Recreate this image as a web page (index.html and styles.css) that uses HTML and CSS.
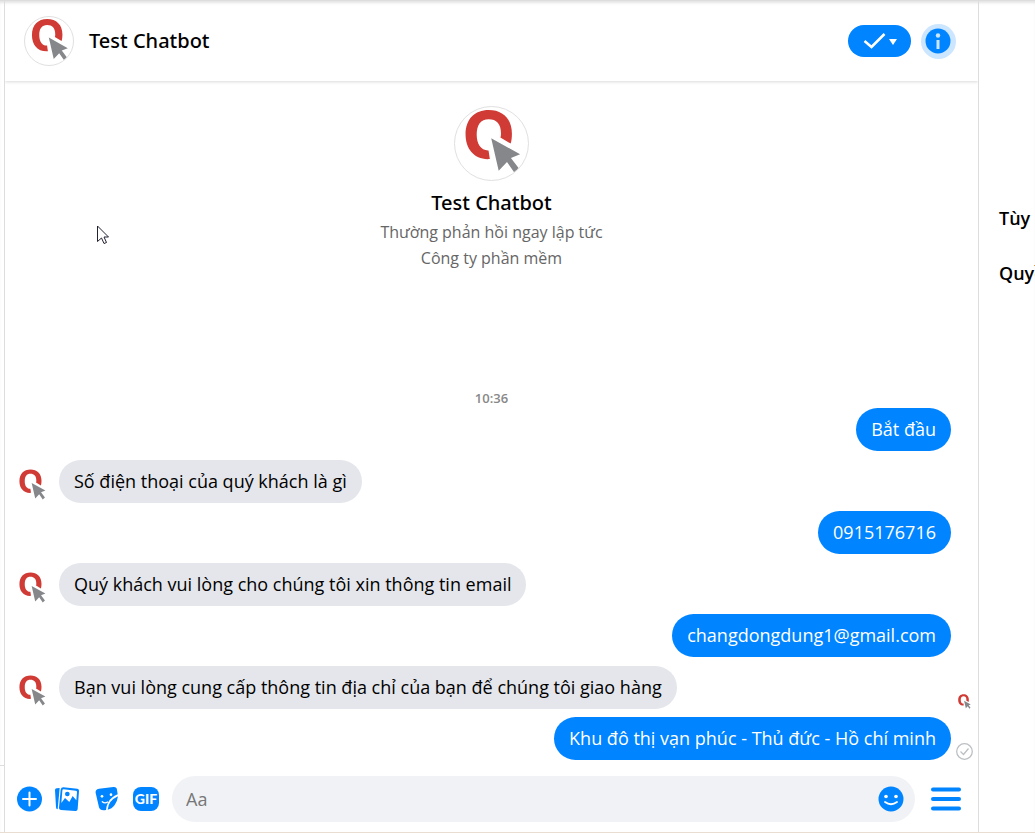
FILE: index.html
```html
<!DOCTYPE html>
<html lang="vi">

    <head>
        <meta charset="UTF-8">
        <meta name="viewport" content="width=device-width, initial-scale=1.0">
        <title>Test Chatbot</title>
        <link rel="stylesheet" href="styles.css">
    </head>

    <body>
        <svg class="symbols" aria-hidden="true">
            <symbol id="logo" viewBox="0 0 74 74">
                <path fill="#d03c35" d="M35.3 52.8C20 54 10.7 43 10.7 28C10.7 12 20 3 34.2 3C48.5 3 57.7 12 57.7 27C57.7 31 57.3 34 56.4 37L46 31C46.5 30 46.6 28 46.6 26.5C46.6 17 42 12.3 34.2 12.3C26 12.3 22 18 22 28C22 38 26.5 44.3 34 44Z"/>
                <path fill="#85878a" d="M36.7 31.7L66 48L56.7 51.7L65 62.7L60.3 66.7L52.7 55.7L44.3 64.7Z"/>
            </symbol>
            <symbol id="logo-small" viewBox="10 2 57 66">
                <path fill="#d03c35" d="M35.3 52.8C20 54 10.7 43 10.7 28C10.7 12 20 3 34.2 3C48.5 3 57.7 12 57.7 27C57.7 31 57.3 34 56.4 37L46 31C46.5 30 46.6 28 46.6 26.5C46.6 17 42 12.3 34.2 12.3C26 12.3 22 18 22 28C22 38 26.5 44.3 34 44Z"/>
                <path fill="#85878a" d="M36.7 31.7L66 48L56.7 51.7L65 62.7L60.3 66.7L52.7 55.7L44.3 64.7Z"/>
            </symbol>
        </svg>

        <div class="page">
            <div class="rail"></div>
            <main class="chat">
                <header class="header">
                    <svg class="logo"><use href="#logo"/></svg>
                    <h1 class="name">Test Chatbot</h1>
                    <button class="done" aria-label="Xong">
                        <svg width="34" height="18" viewBox="0 0 34 18">
                            <path d="M1.5 9L8.5 15L21.5 2" fill="none" stroke="#fff" stroke-width="2.5"/>
                            <path d="M26 7h8l-4 6z" fill="#fff"/>
                        </svg>
                    </button>
                    <button class="info" aria-label="Thông tin">
                        <svg width="35" height="35" viewBox="0 0 35 35">
                            <circle cx="17" cy="17" r="12.5" fill="#0084ff"/>
                            <circle cx="17" cy="11.5" r="2.2" fill="#cce6ff"/>
                            <path d="M15.5 16h3v9h-3z" fill="#cce6ff"/>
                        </svg>
                    </button>
                </header>

                <section class="messages">
                    <div class="profile">
                        <svg class="logo big"><use href="#logo"/></svg>
                        <h2 class="name">Test Chatbot</h2>
                        <p>Thường phản hồi ngay lập tức</p>
                        <p>Công ty phần mềm</p>
                    </div>
                    <time class="time">10:36</time>
                    <div class="row out">
                        <div class="bubble">Bắt đầu</div>
                        <div class="status"></div>
                    </div>
                    <div class="row in">
                        <svg class="avatar"><use href="#logo-small"/></svg>
                        <div class="bubble">Số điện thoại của quý khách là gì</div>
                    </div>
                    <div class="row out">
                        <div class="bubble">0915176716</div>
                        <div class="status"></div>
                    </div>
                    <div class="row in">
                        <svg class="avatar"><use href="#logo-small"/></svg>
                        <div class="bubble">Quý khách vui lòng cho chúng tôi xin thông tin email</div>
                    </div>
                    <div class="row out">
                        <div class="bubble">changdongdung1@gmail.com</div>
                        <div class="status"></div>
                    </div>
                    <div class="row in">
                        <svg class="avatar"><use href="#logo-small"/></svg>
                        <div class="bubble">Bạn vui lòng cung cấp thông tin địa chỉ của bạn để chúng tôi giao hàng</div>
                        <div class="status">
                            <svg width="13" height="15"><use href="#logo-small"/></svg>
                        </div>
                    </div>
                    <div class="row out">
                        <div class="bubble">Khu đô thị vạn phúc - Thủ đức - Hồ chí minh</div>
                        <div class="status">
                            <svg width="17" height="17" viewBox="0 0 17 17" fill="none" stroke="#bcc0c4">
                                <circle cx="8.5" cy="8.5" r="7.8" stroke-width="1.3"/>
                                <path d="M4.5 8.5l3 3l5-6" stroke-width="1.3"/>
                            </svg>
                        </div>
                    </div>
                </section>

                <form class="composer">
                    <div class="tools">
                        <button type="button" aria-label="Thêm">
                            <svg width="26" height="26" viewBox="0 0 26 26">
                                <circle cx="13.5" cy="13" r="12.5" fill="#0084ff"/>
                                <path d="M13.5 6.5v13M7 13h13" stroke="#fff" stroke-width="2" stroke-linecap="round"/>
                            </svg>
                        </button>
                        <button type="button" aria-label="Ảnh">
                            <svg width="26" height="26" viewBox="165 78 78 78">
                                <path d="M165 90Q165 85 170 85L179 84L173 148Q168 148 168 142Z" fill="#0084ff"/>
                                <path d="M190 82L232 86Q238 87 237 93L233 147Q232 154 226 153L183 150Q176 149 177 143L182 89Q183 82 190 82Z" fill="#0084ff"/>
                                <path d="M191 88L227 92Q231 92 231 96L229 121L218 108L208 126L195 114L184 129L187 92Q187 88 191 88Z" fill="#fff"/>
                                <circle cx="202" cy="102" r="7" fill="#0084ff"/>
                            </svg>
                        </button>
                        <button type="button" aria-label="Nhãn dán">
                            <svg width="26" height="26" viewBox="282 78 78 78">
                                <path d="M297 86L340 81Q350 80 351 89L353 103Q333 111 324 128Q318 139 318 150Q300 153 297 142L287 99Q285 88 297 86Z" fill="#0084ff"/>
                                <path d="M354 109Q352 124 344 135Q335 147 323 149Q325 122 354 109Z" fill="#0084ff"/>
                                <circle cx="306" cy="109" r="4" fill="#fff"/>
                                <circle cx="333" cy="104" r="4" fill="#fff"/>
                                <path d="M307 125Q314 132 323 126" fill="none" stroke="#fff" stroke-width="4" stroke-linecap="round"/>
                            </svg>
                        </button>
                        <button type="button" class="gif">GIF</button>
                    </div>
                    <div class="field">
                        <input type="text" placeholder="Aa" aria-label="Tin nhắn">
                        <button type="button" aria-label="Biểu tượng cảm xúc">
                            <svg width="26" height="26" viewBox="0 0 26 26">
                                <circle cx="13" cy="13" r="12.5" fill="#0084ff"/>
                                <circle cx="8" cy="10.5" r="1.8" fill="#fff"/>
                                <circle cx="18" cy="10.5" r="1.8" fill="#fff"/>
                                <path d="M7 16Q13 20.5 19 16" fill="none" stroke="#fff" stroke-width="1.8" stroke-linecap="round"/>
                            </svg>
                        </button>
                    </div>
                    <button type="button" class="menu" aria-label="Menu">
                        <svg width="30" height="24" viewBox="0 0 30 24">
                            <path d="M2 2.5h26M2 12h26M2 21.5h26" stroke="#0084ff" stroke-width="4" stroke-linecap="round"/>
                        </svg>
                    </button>
                </form>
            </main>
            <aside class="side">
                <h3>Tùy chọn</h3>
                <h3>Quyền</h3>
            </aside>
        </div>

        <svg class="pointer" width="14" height="20" viewBox="0 0 14 20">
            <path d="M1.5 1v15.5l4-3.5l2.5 5.5l2.5-1l-2.5-5.5h4.5z" fill="#fff" stroke="#223"/>
        </svg>
    </body>

</html>
```

FILE: styles.css
```css
* {
    margin: 0;
    padding: 0;
    box-sizing: border-box;
}

body {
    font-family: "Open Sans", "Noto Sans", sans-serif;
    color: #000;
    background: #fff;
}

button {
    border: 0;
    background: none;
    cursor: pointer;
}

svg {
    display: block;
}

.symbols {
    position: absolute;
    width: 0;
    height: 0;
}

.page {
    display: flex;
    min-height: 100vh;
    border-top: 1px solid #ddd;
    border-bottom: 1px solid #e8ddd0;
    box-shadow: inset 0 3px 3px -1px #e4e4e4;
}

.rail {
    flex: none;
    width: 4px;
    margin-bottom: 66px;
    border-bottom: 1px solid #ddd;
}

.chat {
    display: flex;
    flex: 1;
    flex-direction: column;
    min-width: 0;
    border-left: 1px solid #ddd;
    border-right: 1px solid #ddd;
}

.header {
    display: flex;
    align-items: center;
    height: 80px;
    padding: 0 22px 0 19px;
    box-shadow: 0 1px 3px rgba(0, 0, 0, .15);
    clip-path: inset(0 0 -6px 0);
}

.logo {
    flex: none;
    width: 50px;
    height: 50px;
    border: 1px solid #e0e0e0;
    border-radius: 50%;
}

.logo.big {
    width: 75px;
    height: 75px;
}

.name {
    font-family: "Noto Sans", "Open Sans", sans-serif;
    font-size: 20px;
    line-height: 28px;
    font-weight: 500;
}

.header .name {
    flex: 1;
    margin-left: 15px;
}

.done {
    display: flex;
    align-items: center;
    justify-content: center;
    width: 63px;
    height: 32px;
    border-radius: 16px;
    background: #0084ff;
}

.info {
    margin-left: 10px;
    border-radius: 50%;
    background: #cce6ff;
}

.messages {
    display: flex;
    flex: 1;
    flex-direction: column;
    padding-top: 25px;
}

.profile {
    display: flex;
    flex-direction: column;
    align-items: center;
}

.profile .name {
    margin-top: 8px;
    margin-bottom: 2px;
}

.profile p {
    font-size: 16px;
    line-height: 26px;
    color: #666;
}

.time {
    margin-top: 120px;
    margin-bottom: 2px;
    font-size: 13px;
    line-height: 15px;
    font-weight: 600;
    text-align: center;
    color: #888;
}

.row {
    display: flex;
    align-items: flex-end;
}

.row.out {
    justify-content: flex-end;
}

.row.in {
    margin: 9px 0 8px;
    padding-left: 14px;
}

.avatar {
    width: 27px;
    height: 31px;
    margin-right: 13px;
    margin-bottom: 3px;
}

.bubble {
    padding: 8px 15px;
    border-radius: 22px;
    font-size: 18px;
    line-height: 27px;
}

.in .bubble {
    background: #e4e6eb;
}

.out .bubble {
    color: #fff;
    background: #0084ff;
}

.status {
    display: flex;
    justify-content: center;
    width: 27px;
}

.in .status {
    margin-left: auto;
}

.composer {
    display: flex;
    align-items: center;
    margin-top: 16px;
    padding: 0 17px 10px 11px;
}

.tools {
    display: flex;
    align-items: center;
    gap: 13px;
}

.gif {
    width: 26px;
    height: 24px;
    border-radius: 8px;
    font-family: Lato, "Open Sans", sans-serif;
    font-size: 14px;
    line-height: 24px;
    font-weight: 900;
    text-align: center;
    color: #fff;
    background: #0084ff;
}

.field {
    display: flex;
    flex: 1;
    align-items: center;
    height: 46px;
    margin-left: 13px;
    padding: 0 11px 0 14px;
    border-radius: 23px;
    background: #f0f2f5;
}

.field input {
    flex: 1;
    min-width: 0;
    border: 0;
    outline: 0;
    background: none;
    font-family: inherit;
    font-size: 18px;
}

.field input::placeholder {
    color: #777;
}

.menu {
    margin-left: 16px;
}

.side {
    flex: none;
    width: 56px;
    padding-top: 204px;
    padding-left: 20px;
    overflow: hidden;
}

.side h3 {
    margin-bottom: 29px;
    font-size: 18px;
    line-height: 26px;
    font-weight: 600;
    white-space: nowrap;
}

/* mouse pointer floating over the conversation */
.pointer {
    position: absolute;
    top: 225px;
    left: 96px;
}
```
